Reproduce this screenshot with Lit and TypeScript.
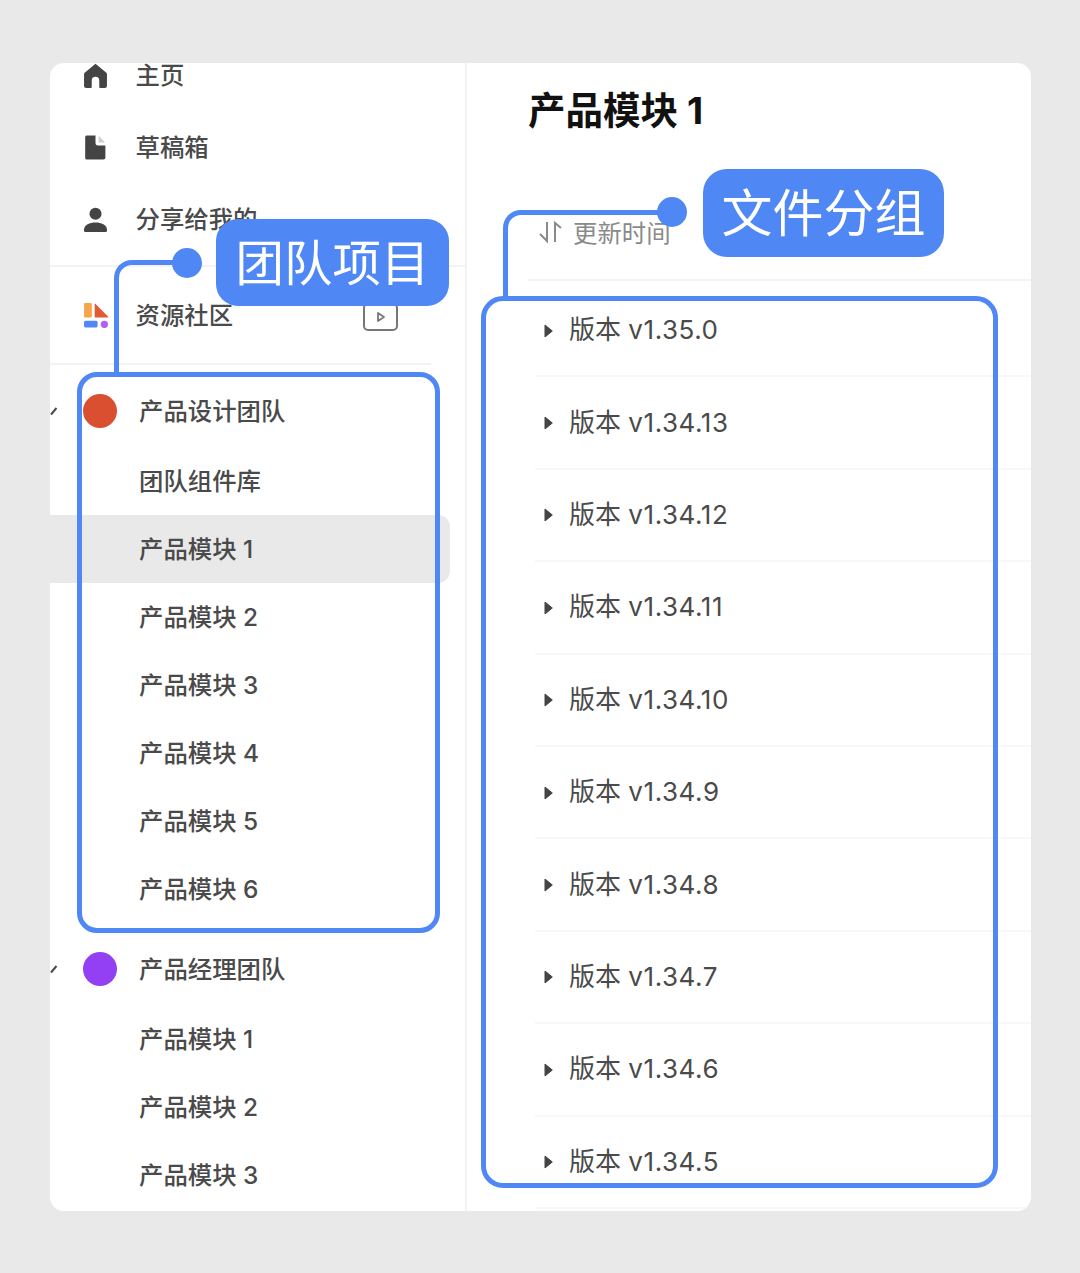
import { LitElement, html, css, svg } from "lit";
import { customElement } from "lit/decorators.js";

const versions = ["1.35.0","1.34.13","1.34.12","1.34.11","1.34.10","1.34.9","1.34.8","1.34.7","1.34.6","1.34.5"];

const chevron = html`<svg class="chev" viewBox="0 0 8 10"><path d="M1 8.5L6.5 2" fill="none" stroke="#4a4a4a" stroke-width="2"/></svg>`;

const icons = {
  home: svg`<path d="M12 .6 1.6 9.4A2 2 0 0 0 1 10.9V22a2 2 0 0 0 2 2h4.4a1 1 0 0 0 1-1v-6.2a3.6 3.6 0 0 1 7.2 0V23a1 1 0 0 0 1 1H21a2 2 0 0 0 2-2V10.9a2 2 0 0 0-.6-1.5L12 .6Z" fill="#444"/>`,
  file: svg`<path d="M3.6 0.5H12V8a2 2 0 0 0 2 2h7.500V21.500a2 2 0 0 1-2 2H3.600a1.500 1.500 0 0 1-1.500-1.500V2a1.500 1.500 0 0 1 1.500-1.500Z" fill="#444"/><path d="M15 .8 21.300 7.200H15Z" fill="#cfcfcf"/>`,
  user: svg`<circle cx="12" cy="6.500" r="5.800" fill="#444"/><path d="M1 21.600C1 17 6.500 14.800 12 14.800S23 17 23 21.600V23a1 1 0 0 1-1 1H2a1 1 0 0 1-1-1Z" fill="#444"/>`,
  logo: svg`<rect x="1" y="0" width="7.500" height="14" rx="1" fill="#f7a54a"/><path d="M11.600 .4 24 13a.6.6 0 0 1-.4 1H12a.8.8 0 0 1-.8-.8V.6Z" fill="#e25a35"/><rect x="1" y="17" width="13" height="6.500" rx="1.500" fill="#4f87f5"/><circle cx="20.500" cy="20.500" r="3.500" fill="#b160f5"/>`,
};

const icon = (k: keyof typeof icons) => html`<svg class="ico" viewBox="0 0 24 24">${icons[k]}</svg>`;

@customElement("app-root")
export class AppRoot extends LitElement {
  static styles = css`
    :host { display: block; position: relative; width: 1080px; height: 1273px; box-sizing: border-box; padding: 62.500px 49px 62.500px 50px; background: #e9e9e9; font-family: "Inter", "Noto Sans CJK SC", sans-serif; color: #4a4a4a; }
    * { box-sizing: border-box; }
    .card { display: flex; height: 100%; background: #fff; border-radius: 14px; overflow: hidden; }
    .side { width: 417px; flex: none; border-right: 2px solid #f3f3f3; }
    .nav { margin-top: -23.500px; }
    .nav-row { display: flex; align-items: center; height: 72px; padding-left: 33px; font-size: 24.400px; font-weight: 500; position: relative; }
    .txt { line-height: 24px; }
    .ico { width: 25px; height: 25px; flex: none; margin-right: 27.500px; }
    .rule { height: 2px; background: #f3f3f3; }
    .rule.a { margin-top: 10px; margin-bottom: 12px; }
    .rule.b { margin-top: 12px; margin-bottom: 12px; margin-right: 34px; }
    .play { position: absolute; left: 313px; top: 24px; width: 35px; height: 28px; border: 2.500px solid #777; border-radius: 5px; display: flex; align-items: center; justify-content: center; }
    .play svg { width: 10px; height: 12px; }
    .group-head { display: flex; align-items: center; height: 68px; margin-bottom: 2px; font-size: 24.400px; font-weight: 500; }
    .group + .group { margin-top: 12px; }
    .chev { width: 8px; height: 10px; flex: none; margin-right: 24.500px; }
    .dot { width: 34px; height: 34px; border-radius: 50%; flex: none; margin-right: 22.500px; }
    .tree-row { display: flex; align-items: center; height: 68px; padding-left: 89px; font-size: 24.400px; font-weight: 500; }
    .tree-row.sel { background: #e9e9e9; margin-right: 15px; border-radius: 0 12px 12px 0; }
    .main { flex: 1; min-width: 0; }
    h1 { margin: 18px 0 0; padding-left: 61px; height: 60px; line-height: 60px; font-size: 37.500px; font-weight: 700; color: #111; }
    .sort { display: flex; align-items: center; height: 40px; margin: 72px 0 0 0; padding-left: 71px; font-size: 24.400px; color: #8a8a8a; }
    .sort svg { width: 24px; height: 24px; margin: 0 11px 2px 0; }
    .sort span { line-height: 24px; }
    .rule.c { margin: 26px 0 4.500px 61px; }
    .ver { display: flex; align-items: center; height: 92.400px; margin-left: 68px; padding-left: 9px; border-bottom: 2px solid #f8f8f8; font-size: 26px; }
    .ver svg { width: 9px; height: 14px; margin-right: 16px; flex: none; margin-top: 1px; }
    .ver .txt { line-height: 28px; }
    .num { letter-spacing: .55px; }
    .box { position: absolute; border: 5px solid #4f87f5; pointer-events: none; }
    .box.team { left: 77px; top: 372px; width: 362.500px; height: 560.500px; border-radius: 20px; }
    .box.file { left: 480.500px; top: 296px; width: 517px; height: 891.500px; border-radius: 22px; }
    .wire { position: absolute; border: solid #4f87f5; border-width: 5px 0 0 5px; border-top-left-radius: 18px; }
    .wire.team { left: 113.500px; top: 260px; width: 70px; height: 113px; }
    .wire.file { left: 503px; top: 209.500px; width: 165px; height: 88px; }
    .pin { position: absolute; width: 30px; height: 30px; border-radius: 50%; background: #4f87f5; }
    .pin.team { left: 172px; top: 247.500px; }
    .pin.file { left: 657px; top: 197px; }
    .label { position: absolute; display: flex; align-items: center; justify-content: center; padding-bottom: 5px; background: #4f87f5; color: #fff; font-weight: 400; border-radius: 22px; white-space: nowrap; }
    .label.team { left: 216px; top: 219px; width: 233px; height: 87px; font-size: 48.500px; }
    .label.file { left: 703px; top: 169px; width: 241px; height: 87.500px; font-size: 51px; border-radius: 24px; }
  `;

  private group(color: string, name: string, items: string[], sel = -1) {
    return html`<div class="group">
      <div class="group-head">${chevron}<span class="dot" style="background:${color}"></span><span class="txt">${name}</span></div>
      ${items.map((t, i) => html`<div class="tree-row ${i === sel ? "sel" : ""}"><span class="txt">${t}</span></div>`)}
    </div>`;
  }

  render() {
    return html`
      <div class="card">
        <aside class="side">
          <div class="nav">
            <div class="nav-row">${icon("home")}<span class="txt">主页</span></div>
            <div class="nav-row">${icon("file")}<span class="txt">草稿箱</span></div>
            <div class="nav-row">${icon("user")}<span class="txt">分享给我的</span></div>
            <div class="rule a"></div>
            <div class="nav-row">${icon("logo")}<span class="txt">资源社区</span>
              <span class="play"><svg viewBox="0 0 10 12"><path d="M2 2 8 6 2 10Z" fill="none" stroke="#777" stroke-width="1.800" stroke-linejoin="round"/></svg></span>
            </div>
            <div class="rule b"></div>
            ${this.group("#d94f2f", "产品设计团队", ["团队组件库","产品模块 1","产品模块 2","产品模块 3","产品模块 4","产品模块 5","产品模块 6"], 1)}
            ${this.group("#9340f5", "产品经理团队", ["产品模块 1","产品模块 2","产品模块 3"])}
          </div>
        </aside>
        <main class="main">
          <h1>产品模块 1</h1>
          <div class="sort">
            <svg viewBox="0 0 24 24" fill="none" stroke="#8a8a8a" stroke-width="2"><path d="M9 2V21L2 14"/><path d="M17 22V3L23 8"/></svg>
            <span>更新时间</span>
          </div>
          <div class="rule c"></div>
          ${versions.map((v) => html`<div class="ver"><svg viewBox="0 0 9 14"><path d="M1 1 8.300 7 1 13Z" fill="#444" stroke="#444" stroke-linejoin="round"/></svg><span class="txt">版本 <span class="num">v${v}</span></span></div>`)}
        </main>
      </div>
      <div class="wire team"></div>
      <div class="wire file"></div>
      <div class="box team"></div>
      <div class="box file"></div>
      <div class="pin team"></div>
      <div class="pin file"></div>
      <div class="label team">团队项目</div>
      <div class="label file">文件分组</div>
    `;
  }
}
